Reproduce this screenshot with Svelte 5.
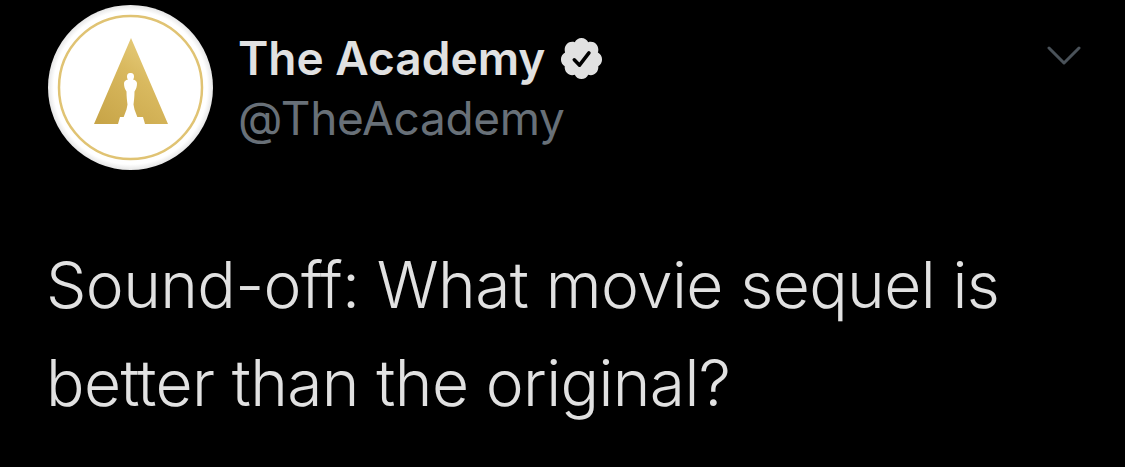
<script>
  const name = 'The Academy';
  const handle = '@TheAcademy';
  const body = 'Sound-off: What movie sequel is better than the original?';
</script>

<main class="tweet">
  <header class="head">
    <svg class="avatar" viewBox="48 5 165 165" aria-hidden="true">
      <defs>
        <linearGradient id="gold" x1="0.1" y1="1" x2="0.75" y2="0">
          <stop offset="0" stop-color="#c8a548" />
          <stop offset="0.6" stop-color="#d9b95f" />
          <stop offset="1" stop-color="#e8cf7f" />
        </linearGradient>
        <radialGradient id="disc" cx="0.5" cy="0.5" r="0.5">
          <stop offset="0.93" stop-color="#ffffff" />
          <stop offset="1" stop-color="#e6e6e6" />
        </radialGradient>
      </defs>
      <circle cx="130.5" cy="87.5" r="82.500" fill="url(#disc)" />
      <circle cx="130.5" cy="87.5" r="71.5" fill="none" stroke="#e0c373" stroke-width="2.500" />
      <path
        fill="url(#gold)"
        d="M131 38 L168 124 L145 124 L143 117 L120 117 L118 124 L94 124 Z"
      />
      <path
        fill="#fff"
        d="M131 73 c2 0 3 1.500 3 3.500 c0 1.500 -.5 2.500 -1 3 c2.500 .5 4 2 4 4 c0 3 -1 6 -2.500 8 c0 5 -.5 9 -1 13 l1 5 l3 8 l-14 0 l3 -8 l1 -5 c-.5 -4 -1 -8 -1 -13 c-1.500 -2 -2.500 -5 -2.500 -8 c0 -2 1.500 -3.500 4 -4 c-.5 -.5 -1 -1.500 -1 -3 c0 -2 1 -3.500 3 -3.500 Z"
      />
    </svg>

    <div class="who">
      <div class="name-row">
        <span class="name">{name}</span>
        <svg class="badge" viewBox="0 0 24 24" aria-hidden="true">
          <path
            fill="#e1e1e1"
            d="M22.500 12.500c0-1.580-.875-2.950-2.148-3.600.154-.435.238-.905.238-1.400 0-2.210-1.710-3.998-3.818-3.998-.470 0-.920.084-1.336.250C14.818 2.415 13.510 1.500 12 1.500s-2.816.917-3.437 2.250c-.415-.165-.866-.250-1.336-.250-2.110 0-3.818 1.790-3.818 4 0 .494.083.964.237 1.400-1.272.650-2.147 2.018-2.147 3.600 0 1.495.782 2.798 1.942 3.486-.020.170-.032.340-.032.514 0 2.210 1.708 4 3.818 4 .470 0 .920-.086 1.335-.250.620 1.334 1.926 2.250 3.437 2.250 1.512 0 2.818-.916 3.437-2.250.415.163.865.248 1.336.248 2.110 0 3.818-1.790 3.818-4 0-.174-.012-.344-.033-.513 1.158-.687 1.943-1.990 1.943-3.484z"
          />
          <path
            fill="none"
            stroke="#000"
            stroke-width="1.800"
            stroke-linecap="round"
            stroke-linejoin="round"
            d="M8.300 12.700l2.700 2.700 4.800-6.300"
          />
        </svg>
      </div>
      <div class="handle">{handle}</div>
    </div>

    <svg class="chevron" viewBox="0 0 34 20" aria-hidden="true">
      <path d="M2 2 L17 17 L32 2" fill="none" stroke="#4a5259" stroke-width="3" stroke-linecap="round" stroke-linejoin="round" />
    </svg>
  </header>

  <p class="body">{body}</p>
</main>

<style>
  :global(body) {
    margin: 0;
    background: #000;
  }
  .tweet {
    width: 1125px;
    height: 467px;
    box-sizing: border-box;
    padding: 5px 44px 0 48px;
    background: #000;
    overflow: hidden;
    font-family: Inter, "Liberation Sans", sans-serif;
  }
  .head {
    display: flex;
    align-items: flex-start;
  }
  .avatar {
    width: 165px;
    height: 165px;
    flex: none;
  }
  .who {
    flex: 1;
    margin-left: 25px;
    padding-top: 23px;
  }
  .name-row {
    display: flex;
    align-items: center;
    gap: 13px;
    height: 60px;
  }
  .name {
    font-size: 46px;
    font-weight: 600;
    color: #e1e1e1;
    line-height: 60px;
  }
  .badge {
    width: 47px;
    height: 47px;
    flex: none;
  }
  .handle {
    font-size: 46px;
    font-weight: 400;
    color: #687078;
    line-height: 60px;
    letter-spacing: -0.3px;
  }
  .chevron {
    width: 34px;
    height: 20px;
    flex: none;
    margin-top: 41px;
  }
  .body {
    margin: 66px 0 0 -2px;
    width: 980px;
    font-size: 64px;
    font-weight: 300;
    line-height: 98px;
    letter-spacing: -0.6px;
    color: #e1e1e1;
  }
</style>
